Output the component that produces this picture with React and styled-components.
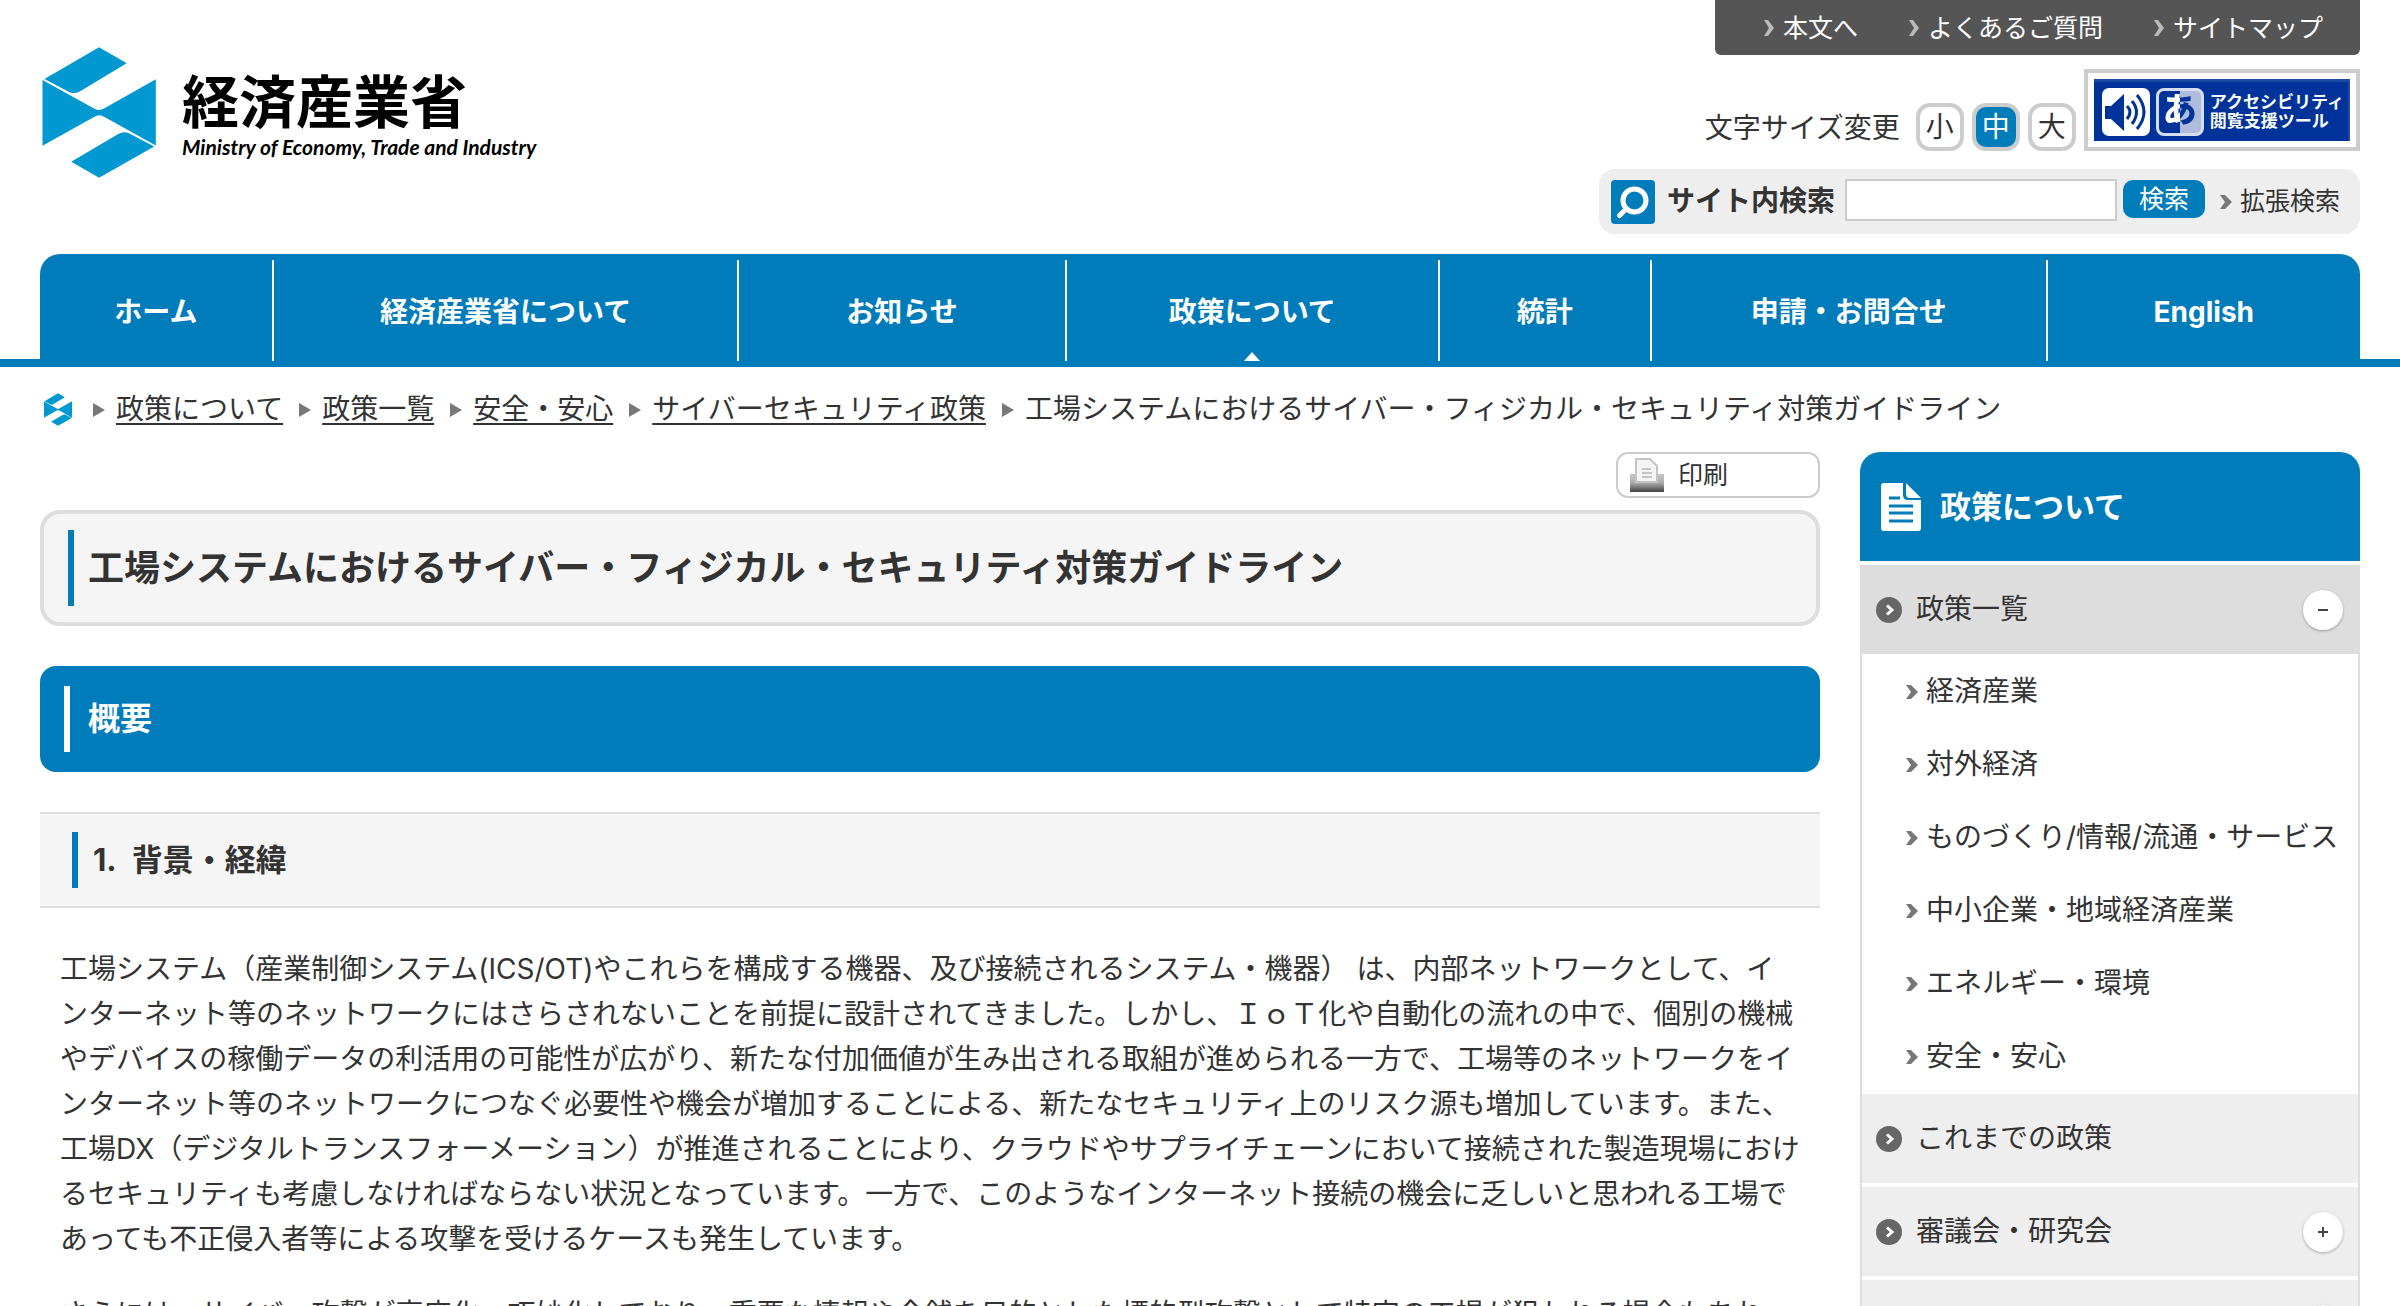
import React, { useState } from "react";
import styled, { createGlobalStyle } from "styled-components";

const blue = "#007cbb";

const GlobalStyle = createGlobalStyle`
  * {
    box-sizing: border-box;
  }
  body {
    margin: 0;
    background: #fff;
    color: #333;
    font-family: Inter, "Noto Sans CJK JP", sans-serif;
    font-size: 28px;
    line-height: 45px;
  }
  h1, h2, h3, p, ul, ol {
    margin: 0;
    padding: 0;
  }
  ul, ol {
    list-style: none;
  }
  a {
    color: inherit;
    text-decoration: none;
  }
  button, input {
    font: inherit;
    color: inherit;
    margin: 0;
  }
  svg {
    display: block;
    flex: none;
  }
`;

const Header = styled.header`
  display: flex;
  justify-content: space-between;
  align-items: flex-start;
  padding: 0 40px 20px;
`;

const LogoLink = styled.a`
  display: flex;
  gap: 24px;
  padding-top: 46px;
  color: #000;
`;

const LogoText = styled.span`
  display: flex;
  flex-direction: column;
  padding-top: 24px;
`;

const LogoName = styled.span`
  font-size: 57px;
  font-weight: 700;
  line-height: 65px;
`;

const LogoSub = styled.span`
  font-family: Lato, "Noto Sans", sans-serif;
  font-size: 21px;
  font-style: italic;
  font-weight: 700;
  line-height: 24px;
`;

const HeaderTools = styled.div`
  display: flex;
  flex-direction: column;
  align-items: flex-end;
`;

const TopLinks = styled.ul`
  display: flex;
  gap: 50px;
  height: 55px;
  padding: 0 37px 0 48px;
  border-radius: 0 0 6px 6px;
  background: #555;
  color: #fff;
  font-size: 25px;
  line-height: 56px;
`;

const ArrowLink = styled.a`
  display: flex;
  align-items: center;
  gap: 8px;
`;

const SizeRow = styled.div`
  display: flex;
  align-items: flex-end;
  gap: 8px;
  margin: 14px 0 18px;
`;

const SizeLabel = styled.span`
  padding-right: 8px;
`;

const SizeButton = styled.button`
  width: 48px;
  height: 48px;
  padding: 0;
  border: 4px solid #ccc;
  border-radius: 14px;
  background: ${(props) => (props.$active ? blue : "#fff")};
  color: ${(props) => (props.$active ? "#fff" : "#333")};
  line-height: 40px;
  cursor: pointer;
`;

const Banner = styled.a`
  padding: 6px;
  border: 4px solid #ccc;
`;

const BannerBody = styled.span`
  display: flex;
  align-items: center;
  gap: 6px;
  height: 62px;
  padding: 0 4px 0 8px;
  border-top: 3px solid #1c4ba3;
  border-right: 2px solid #1c4ba3;
  background: #003399;
  color: #fff;
`;

const KanaTile = styled.span`
  width: 48px;
  height: 48px;
  border: 3px solid #d5ddf0;
  border-radius: 8px;
  background: linear-gradient(90deg, #003399 50%, #aebbdd 50%);
  font-size: 34px;
  font-weight: 900;
  line-height: 38px;
  text-align: center;

  > span {
    background: linear-gradient(90deg, #fff 50%, #003399 50%);
    background-clip: text;
    color: transparent;
  }
`;

const BannerText = styled.span`
  font-size: 17px;
  font-weight: 700;
  line-height: 19px;
  white-space: nowrap;
`;

const SearchForm = styled.form`
  display: flex;
  align-items: center;
  height: 65px;
  padding: 0 20px 0 12px;
  border-radius: 16px;
  background: #eee;
`;

const SearchLabel = styled.label`
  display: flex;
  align-items: center;
  gap: 12px;
  font-weight: 700;
`;

const SearchInput = styled.input`
  width: 272px;
  height: 42px;
  margin: 0 6px 4px 10px;
  border: 2px solid #ccc;
  background: #fff;
`;

const SearchButton = styled.button`
  width: 82px;
  height: 38px;
  margin: 0 15px 6px 0;
  padding: 0;
  border: none;
  border-radius: 10px;
  background: ${blue};
  color: #fff;
  font-size: 25px;
  line-height: 36px;
  cursor: pointer;
`;

const SmallText = styled.span`
  font-size: 25px;
`;

const NavBar = styled.nav`
  padding: 0 40px;
  background: linear-gradient(${blue}, ${blue}) bottom / 100% 8px no-repeat;
`;

const NavList = styled.ul`
  display: flex;
  height: 113px;
  padding: 6px 0;
  border-radius: 20px 20px 0 0;
  background: ${blue};
`;

const NavItem = styled.li`
  position: relative;
  flex: ${(props) => props.$grow} 1 0;
  color: #fff;
  font-weight: 700;
  line-height: 104px;
  text-align: center;

  & + & {
    border-left: 2px solid #fff;
  }
`;

const NavMark = styled.svg`
  position: absolute;
  left: 50%;
  bottom: 0;
  margin-left: -8px;
`;

const Breadcrumb = styled.ol`
  display: flex;
  align-items: center;
  padding: 20px 43px 0;
`;

const HomeCrumb = styled.li`
  padding-right: 4px;
`;

const Crumb = styled.li`
  display: flex;
  align-items: center;
  gap: 11px;
  padding-left: 16px;

  > a {
    text-decoration: underline;
    text-underline-offset: 4px;
    text-decoration-thickness: 2px;
  }
`;

const Columns = styled.div`
  display: grid;
  grid-template-columns: 1fr 500px;
  gap: 40px;
  align-items: start;
  padding: 20px 40px 0;
`;

const Main = styled.main`
  display: flex;
  flex-direction: column;
`;

const PrintButton = styled.button`
  display: flex;
  align-items: center;
  align-self: flex-end;
  gap: 14px;
  width: 204px;
  height: 46px;
  margin-bottom: 12px;
  padding: 0 12px;
  border: 2px solid #ccc;
  border-radius: 12px;
  background: #fff;
  font-size: 25px;
  cursor: pointer;
`;

const PageTitle = styled.h1`
  display: flex;
  align-items: center;
  gap: 14px;
  margin-bottom: 40px;
  padding: 16px 24px;
  border: 4px solid #ddd;
  border-radius: 20px;
  background: #f5f5f5;
  font-size: 36px;
  line-height: 76px;
`;

const SectionTitle = styled.h2`
  display: flex;
  align-items: center;
  gap: 18px;
  margin-bottom: 40px;
  padding: 20px 24px;
  border-radius: 16px;
  background: ${blue};
  color: #fff;
  font-size: 32px;
  line-height: 66px;
`;

const SubTitle = styled.h3`
  display: flex;
  align-items: center;
  gap: 15px;
  margin-bottom: 39px;
  padding: 18px 32px;
  border-top: 2px solid #ddd;
  border-bottom: 2px solid #ddd;
  background: #f5f5f5;
  font-size: 31px;
  line-height: 56px;
`;

const TitleBar = styled.span`
  align-self: stretch;
  width: 6px;
  background: ${(props) => props.color};
`;

const Paragraph = styled.p`
  margin-bottom: 30px;
  padding: 0 20px;
`;

const Sidebar = styled.aside`
  min-width: 0;
`;

const SideHeading = styled.h2`
  display: flex;
  align-items: center;
  gap: 18px;
  height: 109px;
  padding: 0 20px;
  border-radius: 20px 20px 0 0;
  background: ${blue};
  color: #fff;
  font-size: 31px;
`;

const SideList = styled.ul`
  border: solid #ddd;
  border-width: 0 2px;
`;

const SideRow = styled.div`
  display: flex;
  align-items: center;
  gap: 14px;
  height: 89px;
  margin-top: ${(props) => (props.$flush ? 0 : 4)}px;
  padding: 0 15px 0 14px;
  background: ${(props) => (props.$open ? "#ddd" : "#eee")};

  > a {
    flex: 1;
  }
`;

const Toggle = styled.button`
  display: flex;
  align-items: center;
  justify-content: center;
  width: 40px;
  height: 40px;
  padding: 0;
  border: none;
  border-radius: 50%;
  background: #fff;
  box-shadow: 0 1px 3px rgba(0, 0, 0, 0.3);
  cursor: pointer;
`;

const SubList = styled.ul`
  padding: 1px 0 1px 44px;
`;

const SubItem = styled.li`
  line-height: 73px;
  white-space: nowrap;
`;

const LogoMark = ({ width, height }) => (
  <svg width={width} height={height} viewBox="41 46 116 133" fill="#0098d1">
    <path d="M99.1 47.3 126.7 63.3 81 90.7Q76 94 70 92.4L44.4 79Z" />
    <path d="M42.5 80 94 108.4Q99 111.4 104 108.6L155.8 79.3V145.5L104.5 117Q99 113.6 94 117L42.5 145.7Z" />
    <path d="M71.2 161.7 117 134.8Q122 131 128 132.8L154.2 146.4 99.1 177.7Z" />
  </svg>
);

const Chevron = ({ color, bold }) => (
  <svg width="12" height="18" viewBox="0 0 12 18">
    <path d={bold ? "M0 2H5L12 9 5 16H0L5 9Z" : "M1 1H5L11 9 5 17H1L6 9Z"} fill={color} />
  </svg>
);

const CrumbArrow = () => (
  <svg width="12" height="14" viewBox="0 0 12 14">
    <path d="M0 0 12 7 0 14Z" fill="#777" />
  </svg>
);

const RoundArrow = () => (
  <svg width="26" height="26" viewBox="0 0 26 26">
    <circle cx="13" cy="13" r="13" fill="#666" />
    <path d="m11 8.5 5 4.5-5 4.5" fill="none" stroke="#fff" strokeWidth="3" />
  </svg>
);

const SearchMark = () => (
  <svg width="44" height="44" viewBox="0 0 44 44">
    <rect width="44" height="44" rx="4" fill={blue} />
    <circle cx="23.5" cy="20.5" r="11.5" fill="none" stroke="#fff" strokeWidth="5" />
    <path d="M15 29 8.5 35.5" stroke="#fff" strokeWidth="5" strokeLinecap="round" />
  </svg>
);

const SpeakerMark = () => (
  <svg width="48" height="48" viewBox="0 0 48 48">
    <rect width="48" height="48" rx="7" fill="#fff" />
    <path d="M3 18H9L22 6V43L9 31H3Z" fill="#003399" />
    <g fill="none" stroke="#003399" strokeWidth="3">
      <path d="M25 18Q31 24 25 31" />
      <path d="M30 13Q39 24 30 36" />
      <path d="M35 7Q49 24 35 41" />
    </g>
  </svg>
);

const DocumentMark = () => (
  <svg width="42" height="50" viewBox="0 0 42 50">
    <path d="M4 1H23V13Q23 18 28 18H41V46Q41 49 38 49H4Q1 49 1 46V4Q1 1 4 1Z" fill="#fff" />
    <path d="M26 1 41 16H30Q26 16 26 12Z" fill="#fff" />
    <path d="M9 16H20M9 24H33M9 31H33M9 39H33" stroke={blue} strokeWidth="3" />
  </svg>
);

const PrinterMark = () => (
  <svg width="34" height="34" viewBox="0 0 34 34">
    <defs>
      <linearGradient id="tray" x1="0" y1="0" x2="0" y2="1">
        <stop offset="0" stopColor="#c8c8c8" />
        <stop offset="0.5" stopColor="#aaa" />
        <stop offset="1" stopColor="#444" />
      </linearGradient>
    </defs>
    <path d="M0 16H34V34H0Z" fill="url(#tray)" />
    <path d="M6 1H20L27 8V24H6Z" fill="#f4f4f4" stroke="#c4c4c4" strokeWidth="2" />
    <path d="M12 11H21M12 15H22M12 19H22" stroke="#c4c4c4" strokeWidth="2" />
  </svg>
);

const topLinks = ["本文へ", "よくあるご質問", "サイトマップ"];

const sizes = ["小", "中", "大"];

const navItems = [
  { label: "ホーム", grow: 233 },
  { label: "経済産業省について", grow: 466 },
  { label: "お知らせ", grow: 327 },
  { label: "政策について", grow: 373, current: true },
  { label: "統計", grow: 211 },
  { label: "申請・お問合せ", grow: 396 },
  { label: "English", grow: 314 },
];

const crumbs = ["政策について", "政策一覧", "安全・安心", "サイバーセキュリティ政策"];

const title = "工場システムにおけるサイバー・フィジカル・セキュリティ対策ガイドライン";

const paragraphs = [
  "工場システム（産業制御システム(ICS/OT)やこれらを構成する機器、及び接続されるシステム・機器） は、内部ネットワークとして、インターネット等のネットワークにはさらされないことを前提に設計されてきました。しかし、ＩｏＴ化や自動化の流れの中で、個別の機械やデバイスの稼働データの利活用の可能性が広がり、新たな付加価値が生み出される取組が進められる一方で、工場等のネットワークをインターネット等のネットワークにつなぐ必要性や機会が増加することによる、新たなセキュリティ上のリスク源も増加しています。また、工場DX（デジタルトランスフォーメーション）が推進されることにより、クラウドやサプライチェーンにおいて接続された製造現場におけるセキュリティも考慮しなければならない状況となっています。一方で、このようなインターネット接続の機会に乏しいと思われる工場であっても不正侵入者等による攻撃を受けるケースも発生しています。",
  "さらには、サイバー攻撃が高度化・巧妙化しており、重要な情報や金銭を目的とした標的型攻撃として特定の工場が狙われる場合もあれば、",
];

const sideItems = [
  {
    label: "政策一覧",
    children: [
      "経済産業",
      "対外経済",
      "ものづくり/情報/流通・サービス",
      "中小企業・地域経済産業",
      "エネルギー・環境",
      "安全・安心",
    ],
  },
  { label: "これまでの政策" },
  { label: "審議会・研究会", children: [] },
  { label: "白書・報告書", children: [] },
];

const SideMenu = () => {
  const [opened, setOpened] = useState(0);

  return (
    <SideList>
      {sideItems.map(({ label, children }, index) => {
        const open = opened === index;
        return (
          <li key={label}>
            <SideRow $open={open} $flush={index > 0 && opened === index - 1}>
              <RoundArrow />
              <a href="#">{label}</a>
              {children ? (
                <Toggle
                  type="button"
                  aria-label={label}
                  aria-expanded={open}
                  onClick={() => setOpened(open ? null : index)}
                >
                  <svg width="12" height="12" viewBox="0 0 12 12">
                    <path
                      d={open ? "M1 6H11" : "M1 6H11M6 1V11"}
                      stroke="#444"
                      strokeWidth="2"
                    />
                  </svg>
                </Toggle>
              ) : null}
            </SideRow>
            {open && children ? (
              <SubList>
                {children.map((child) => (
                  <SubItem key={child}>
                    <ArrowLink href="#">
                      <Chevron color="#777" bold />
                      {child}
                    </ArrowLink>
                  </SubItem>
                ))}
              </SubList>
            ) : null}
          </li>
        );
      })}
    </SideList>
  );
};

const App = () => {
  const [size, setSize] = useState("中");
  const [query, setQuery] = useState("");

  return (
    <>
      <GlobalStyle />
      <Header>
        <LogoLink href="#">
          <LogoMark width="118" height="133" />
          <LogoText>
            <LogoName>経済産業省</LogoName>
            <LogoSub>Ministry of Economy, Trade and Industry</LogoSub>
          </LogoText>
        </LogoLink>
        <HeaderTools>
          <TopLinks>
            {topLinks.map((label) => (
              <li key={label}>
                <ArrowLink href="#">
                  <Chevron color="#bbb" />
                  {label}
                </ArrowLink>
              </li>
            ))}
          </TopLinks>
          <SizeRow>
            <SizeLabel>文字サイズ変更</SizeLabel>
            {sizes.map((label) => (
              <SizeButton
                key={label}
                type="button"
                $active={label === size}
                onClick={() => setSize(label)}
              >
                {label}
              </SizeButton>
            ))}
            <Banner href="#">
              <BannerBody>
                <SpeakerMark />
                <KanaTile>
                  <span>あ</span>
                </KanaTile>
                <BannerText>
                  アクセシビリティ
                  <br />
                  閲覧支援ツール
                </BannerText>
              </BannerBody>
            </Banner>
          </SizeRow>
          <SearchForm onSubmit={(e) => e.preventDefault()}>
            <SearchLabel htmlFor="query">
              <SearchMark />
              サイト内検索
            </SearchLabel>
            <SearchInput
              id="query"
              type="text"
              value={query}
              onChange={(e) => setQuery(e.target.value)}
            />
            <SearchButton type="submit">検索</SearchButton>
            <ArrowLink href="#">
              <Chevron color="#777" bold />
              <SmallText>拡張検索</SmallText>
            </ArrowLink>
          </SearchForm>
        </HeaderTools>
      </Header>
      <NavBar>
        <NavList>
          {navItems.map(({ label, grow, current }) => (
            <NavItem key={label} $grow={grow}>
              <a href="#">{label}</a>
              {current ? (
                <NavMark width="16" height="9" viewBox="0 0 16 9">
                  <path d="M8 0 16 9H0Z" fill="#fff" />
                </NavMark>
              ) : null}
            </NavItem>
          ))}
        </NavList>
      </NavBar>
      <Breadcrumb>
        <HomeCrumb>
          <a href="#" aria-label="ホーム">
            <LogoMark width="30" height="33" />
          </a>
        </HomeCrumb>
        {crumbs.map((label) => (
          <Crumb key={label}>
            <CrumbArrow />
            <a href="#">{label}</a>
          </Crumb>
        ))}
        <Crumb>
          <CrumbArrow />
          {title}
        </Crumb>
      </Breadcrumb>
      <Columns>
        <Main>
          <PrintButton type="button">
            <PrinterMark />
            印刷
          </PrintButton>
          <PageTitle>
            <TitleBar color={blue} />
            {title}
          </PageTitle>
          <SectionTitle>
            <TitleBar color="#fff" />
            概要
          </SectionTitle>
          <SubTitle>
            <TitleBar color={blue} />
            <span>1.</span>
            <span>背景・経緯</span>
          </SubTitle>
          {paragraphs.map((text) => (
            <Paragraph key={text}>{text}</Paragraph>
          ))}
        </Main>
        <Sidebar>
          <SideHeading>
            <DocumentMark />
            政策について
          </SideHeading>
          <SideMenu />
        </Sidebar>
      </Columns>
    </>
  );
};

export default App;
